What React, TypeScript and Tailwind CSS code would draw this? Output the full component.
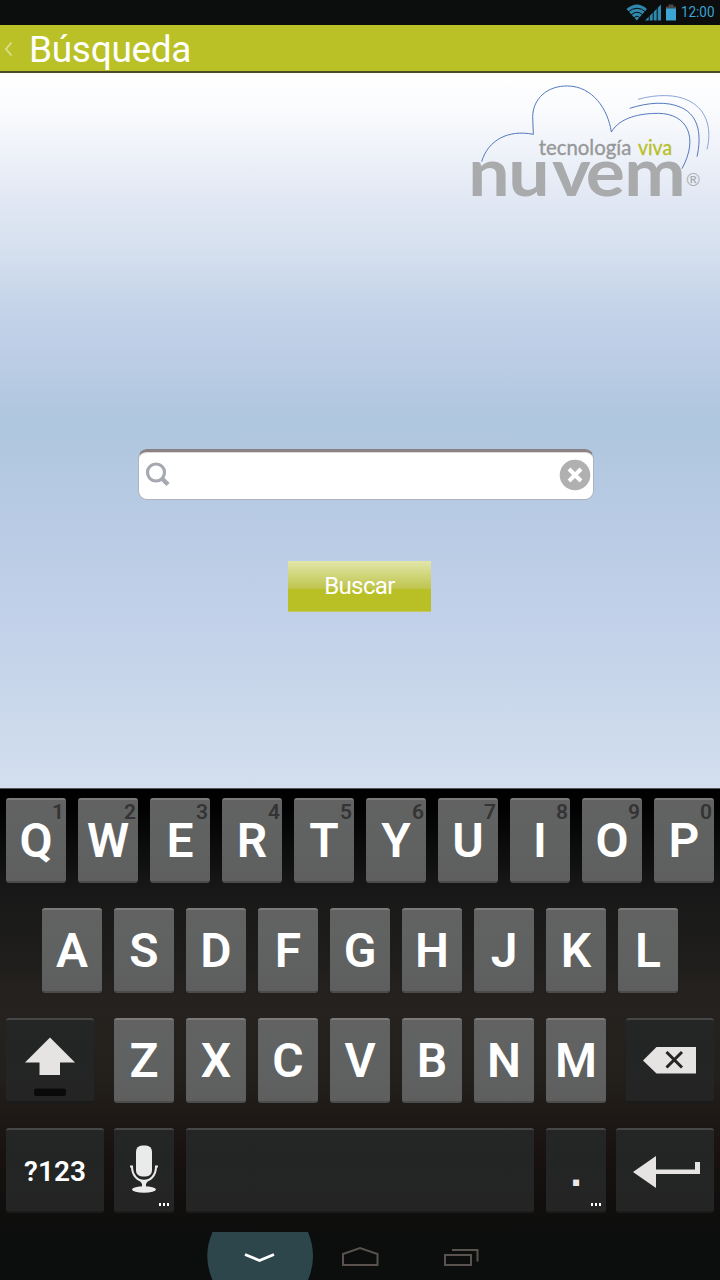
import type { ReactNode } from "react";

const letterKey =
  "relative flex h-[85px] w-[60px] shrink-0 items-center justify-center rounded-[3px] border-t-2 border-b-2 border-t-[#7b7b7b] border-b-[#4b4b4b] bg-linear-to-b from-[#626262] via-[#606262] to-[#5e5e5e] text-[48px] leading-none font-semibold text-white";
const darkKey =
  "relative flex h-[85px] shrink-0 items-center justify-center rounded-[3px] border-t-2 border-b-2 border-t-[#474747] border-b-[#1a1c1b] bg-linear-to-b from-[#232625] to-[#242424]";

function LetterKey({ label, hint }: { label: string; hint?: string }) {
  return (
    <button className={letterKey}>
      <span>{label}</span>
      {hint && (
        <span className="absolute top-[2px] right-[2px] text-[21px] leading-[21px] font-semibold text-[#343434]">{hint}</span>
      )}
    </button>
  );
}

function DarkKey({ width, children, more }: { width: string; children?: ReactNode; more?: boolean }) {
  return (
    <button className={`${darkKey} ${width}`}>
      {children}
      {more && (
        <span className="absolute right-[5px] bottom-[5px] flex gap-[2px]">
          <i className="h-[3px] w-[2px] bg-white" />
          <i className="h-[3px] w-[2px] bg-white" />
          <i className="h-[3px] w-[2px] bg-white" />
        </span>
      )}
    </button>
  );
}

function StatusBar() {
  return (
    <div className="flex h-[25px] items-center justify-end bg-[#0b0e0d] pr-[4px]">
      <svg width="52" height="25" viewBox="626 0 52 25">
        <path d="M626.5 9Q637 0 647 9L636.800 20.500Z" fill="#2f88ad" />
        <path d="M628 12Q637 4.500 646 12M631 15Q637 9.500 643 15M634 18Q637 14.500 640 18" fill="none" stroke="#0b0e0d" strokeWidth="1" />
        <path d="M645 20.500L661 4.500V20.500Z" fill="#2f88ad" />
        <path d="M649.200 3V21M653.200 3V21M657.200 3V21" stroke="#0b0e0d" strokeWidth="1" />
        <path d="M668.500 4.500H673.500V6.500H676V9H666V6.500H668.500Z" fill="#4a4645" />
        <path d="M666 8.500H676V20.500H666Z" fill="#3ba5d3" />
      </svg>
      <svg width="38" height="25" viewBox="0 0 38 25">
        <text x="3" y="17" textLength="33.500" lengthAdjust="spacingAndGlyphs" fontSize="15.500" fill="#3ba5d3">12:00</text>
      </svg>
    </div>
  );
}

function Logo() {
  return (
    <svg width="260" height="135" viewBox="0 0 780 405">
      <g fill="none" stroke="#5479be" strokeWidth="3">
        <path d="M65 263C84 198 145 166 220 181L218 128C219 72 264 35 322 36C397 36 444 105 454 174C480 130 540 118 595 118C682 119 717 190 666 284" />
        <path d="M509 103C565 85 622 81 665 101C720 127 724 190 711 248" />
        <path d="M534 76C587 61 649 59 690 82C744 111 755 170 741 226" stroke="#8aa6d8" />
      </g>
      <text x="236" y="243" textLength="278" lengthAdjust="spacingAndGlyphs" fontFamily="Lato, sans-serif" fontSize="65" fill="#969798" stroke="#969798" strokeWidth="1">tecnología</text>
      <text x="534" y="243" textLength="102" lengthAdjust="spacingAndGlyphs" fontFamily="Lato, sans-serif" fontSize="65" fill="#b8bf26" stroke="#b8bf26" strokeWidth="1">viva</text>
      <text transform="translate(0 365) scale(1.100 1)" x="22.500 131.500 251 343 448" y="0" fontFamily="Lato, sans-serif" fontWeight="700" fontSize="200" fill="#a9aaac">nuvem</text>
      <text x="678" y="337" fontFamily="Lato, sans-serif" fontSize="52" fill="#a9aaac">®</text>
    </svg>
  );
}

function Keyboard() {
  return (
    <section className="flex h-[444px] flex-col gap-[25px] border-t border-[#55555a] bg-[linear-gradient(to_bottom,#000_0%,#020202_5%,#181818_23%,#1b1b1a_30%,#26221f_50%,#231f1b_65%,#16110f_85%,#0d0e0d_100%)] px-[6px] pt-[9px]">
      <div className="flex gap-3">
        {"QWERTYUIOP".split("").map((c, i) => (
          <LetterKey key={c} label={c} hint={"1234567890"[i]} />
        ))}
      </div>
      <div className="flex justify-center gap-3">
        {"ASDFGHJKL".split("").map((c) => (
          <LetterKey key={c} label={c} />
        ))}
      </div>
      <div className="flex justify-between">
        <DarkKey width="w-[88px]">
          <svg width="88" height="81" viewBox="6 1020 88 81">
            <path d="M50 1037.500L75 1062.500H60V1075H39.500V1062.500H25Z" fill="#e5e4e2" />
            <rect x="34" y="1088.500" width="32" height="7.500" rx="2.500" fill="#0a0a0a" />
          </svg>
        </DarkKey>
        <div className="flex gap-3">
          {"ZXCVBNM".split("").map((c) => (
            <LetterKey key={c} label={c} />
          ))}
        </div>
        <DarkKey width="w-[88px]">
          <svg width="88" height="81" viewBox="626 1020 88 81">
            <path d="M643 1060.500L656.500 1047H696V1073.500H656.500Z" fill="#e5e4e2" />
            <path d="M666.500 1052L682 1067.500M682 1052L666.500 1067.500" stroke="#242424" strokeWidth="3" />
          </svg>
        </DarkKey>
      </div>
      <div className="flex">
        <DarkKey width="w-[98px] mr-[10px]">
          <span className="pt-[3px] text-[28px] leading-none font-semibold text-white">?123</span>
        </DarkKey>
        <DarkKey width="w-[60px] mr-3" more>
          <svg width="60" height="81" viewBox="114 1130 60 81" fill="#eaeaea">
            <rect x="136" y="1145.500" width="16" height="31" rx="6" />
            <path d="M130 1166.500H132C132 1185.500 156 1185.500 156 1166.500H158" fill="none" stroke="#eaeaea" strokeWidth="2" />
            <path d="M139.500 1180H148.500L146 1184V1187H142V1184Z" />
            <ellipse cx="144" cy="1189.500" rx="12" ry="3.200" />
          </svg>
        </DarkKey>
        <DarkKey width="w-[348px] mr-3" />
        <DarkKey width="w-[60px] mr-[10px]" more>
          <span className="pt-[2px] font-['Liberation_Sans',sans-serif] text-[42px] leading-none font-bold text-[#eaeaea]">.</span>
        </DarkKey>
        <DarkKey width="w-[98px]">
          <svg width="98" height="81" viewBox="616 1130 98 81">
            <path d="M633 1172L656 1156V1169.500H695V1162H700V1174H656V1188Z" fill="#e5e4e2" />
          </svg>
        </DarkKey>
      </div>
    </section>
  );
}

function NavBar() {
  return (
    <nav className="h-12 bg-[#0b0e0d]">
      <svg width="720" height="48" viewBox="0 1232 720 48" fill="none">
        <path d="M212.500 1232H308Q318 1256 308 1280H212.500Q202 1256 212.500 1232Z" fill="#2c464c" />
        <path d="M245 1254.500L259.500 1260.500L274 1254.500" stroke="#fff" strokeWidth="2.800" />
        <path d="M343 1265V1254L360 1248L377.500 1254V1265Z" stroke="#59524f" strokeWidth="2" />
        <path d="M445 1255H471V1265H445ZM452 1250H477.500V1261.500" stroke="#59524f" strokeWidth="2" />
      </svg>
    </nav>
  );
}

export default function App() {
  return (
    <div className="flex h-[1280px] w-[720px] flex-col overflow-hidden font-[Roboto,sans-serif]">
      <StatusBar />
      <header className="flex h-12 items-center border-b-2 border-[#4b4a26] bg-[#bac127]">
        <svg width="29" height="46" viewBox="0 25 29 46">
          <path d="M11.500 42.500L6 49L11.500 55.500" fill="none" stroke="#dbe08f" strokeWidth="1.800" />
        </svg>
        <h1 className="pt-[3px] text-[37px] leading-none tracking-[-0.3px] text-white">Búsqueda</h1>
      </header>
      <main className="flex h-[715px] flex-col items-center bg-[linear-gradient(to_bottom,#ffffff_0%,#fafbfd_5%,#dfe6f3_19%,#d5e0ee_25%,#c3d2e9_34%,#afc6df_49%,#c2d1e9_77%,#d3dfee_100%)]">
        <div className="mt-px flex w-full justify-end">
          <Logo />
        </div>
        <label className="mt-[240px] ml-[12px] flex h-[51px] w-[456px] items-center justify-between rounded-[9px] border border-t-[3px] border-[#adb2bd] border-t-[#8a8284] bg-white pr-[2px] pb-px pl-[6px] shadow-[inset_0_1px_0_#ded9da]">
          <svg width="26" height="26" viewBox="0 0 26 26" fill="none" stroke="#a6a9b1" strokeWidth="3.200">
            <circle cx="11" cy="10.500" r="8.500" />
            <path d="M17 16.500L23 22.500" strokeWidth="4.500" />
          </svg>
          <input aria-label="Búsqueda" className="h-full min-w-0 flex-1 bg-transparent outline-none" />
          <svg width="32" height="32" viewBox="0 0 32 32">
            <circle cx="16" cy="16" r="15.300" fill="#b0b0b0" />
            <path d="M10 10L22 22M22 10L10 22" stroke="#fff" strokeWidth="4" />
          </svg>
        </label>
        <button className="mt-[61px] mr-px flex h-[51px] w-[143px] items-center justify-center border-b border-[#c2c762] bg-[linear-gradient(to_bottom,#e2e6aa_0%,#bfc54e_55%,#b9c026_56%,#b9c026_100%)] text-[24px] leading-none tracking-[-0.6px] text-white">
          Buscar
        </button>
      </main>
      <Keyboard />
      <NavBar />
    </div>
  );
}
